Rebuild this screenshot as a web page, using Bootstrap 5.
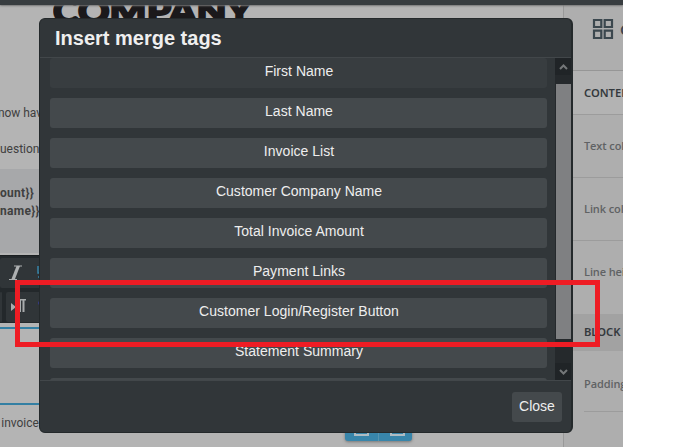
<!DOCTYPE html>
<html lang="en">
<head>
<meta charset="utf-8">
<meta name="viewport" content="width=device-width, initial-scale=1">
<title>Insert merge tags</title>
<link href="https://cdn.jsdelivr.net/npm/bootstrap@5.3.0/dist/css/bootstrap.min.css" rel="stylesheet">
<style>
body{width:676px;height:447px;overflow:hidden;background:#fff;font-family:"Liberation Sans",Arial,sans-serif;font-size:14px;line-height:18px}
.editor{width:623px;height:447px;background:#b4b4b4}
.topbar{height:5px;background:#383d40;box-shadow:0 1px 2px #777;z-index:1}
.mail{width:563px;font:12px/18px Roboto,sans-serif;color:#3f4040}
.brand{height:99px;padding:0 0 0 53px;font:900 33px/11px Lato,sans-serif;color:#1b191b;white-space:nowrap;-webkit-text-stroke:2px #1b191b}
.brand span{display:inline-block;transform:scaleX(1.18);transform-origin:0 0}
.copy{height:65px;white-space:nowrap}
.copy p{height:36px}
.copy p:first-child{text-indent:-2px;letter-spacing:-.05px}
.totals{height:84px;background:#a7a8aa;padding-top:15px;font-weight:700;white-space:nowrap;letter-spacing:.3px}
.tools{height:68px;margin-top:2px;background:#23282b;border-top:1px solid #1b1f21;padding-top:2px}
.tool{height:30px;background:#303538;border-radius:2px}
.tool-edge{width:2px}
.rule{height:2px;background:#337fa3}
.blank{height:74px}
.invoice-line{height:24px;padding-top:9px}
.picker{width:67px;height:12px;background:#3885aa;border-radius:0 0 3px 3px;box-shadow:0 1px 3px #777;margin-left:345px}
.side{width:60px;border-left:1px solid #999;background:#aeaeae;font:600 11.2px/18px "Noto Sans",sans-serif;color:#606264;white-space:nowrap}
.side>div{padding-left:20px;overflow:hidden;border-bottom:1px solid #9c9c9c;flex:none}
.side .head{height:66px;padding:13px 0 0 28px;border-bottom:1px solid #969696;font-size:15px;color:#3b4650}
.head-label{margin-left:6px;padding-top:2px}
.side .sect{height:44px;padding-top:13px;background:#b3b3b3;color:#34393d}
.side .opt{height:63px;padding-top:22px;font-family:"Open Sans",sans-serif;font-size:11px;letter-spacing:-.1px}
.side .line-opt{height:73px;border:0}
.side .pad-opt{height:60px;padding-top:24px}
.side .pad-opt{border:0}
.side .block-sect{height:37px;background:#a2a2a2;padding-top:9px;color:#34393d;border:0}
.side .foot-line{width:39px;padding:0}
.merge-box{left:39px;top:18px;width:534px;height:415px;background:#313639;border:1px solid #24292b;border-width:1px 2px 1px 1px;border-radius:6px;color:#eee;z-index:2;overflow:hidden}
.merge-head{height:39px;border-bottom:1px solid #42474a;padding-left:15px;font-weight:700;font-size:20px;line-height:38px;color:#efefef}
.merge-body{height:322px}
.tags{width:515px;padding:0 8px 0 10px;gap:10px}
.tag,.tag:hover{height:30px;flex:none;background:#44494c;border:0;border-radius:3px;color:#eee;font-size:14px;line-height:16px;padding:0 0 4px 1px;display:block;letter-spacing:.02px}
.tag:first-child{background:#383d40}
.scroller{width:16px;background:#25292c}
.arrow{height:17px;background:#202427}
.thumb{height:255px;margin-top:9px;margin-left:1px;background:#7f8082}
.merge-foot{height:52px;border-top:1px solid #42474a;padding:11px 9px 0 0}
.close-btn,.close-btn:hover{width:50px;height:30px;background:#44494c;color:#eee;border:0;border-radius:3px;padding:0 0 2px;font-size:14px;line-height:28px}
.marker{left:15px;top:280px;width:585px;height:67px;border:5px solid #ee1c24;z-index:3}
</style>
<script src="https://cdn.jsdelivr.net/npm/bootstrap@5.3.0/dist/js/bootstrap.bundle.min.js"></script>
</head>
<body class="position-relative m-0">
<div class="editor d-flex flex-column overflow-hidden">
  <div class="topbar position-relative flex-shrink-0"></div>
  <div class="d-flex flex-grow-1">
    <main class="mail flex-shrink-0 overflow-hidden">
      <div class="brand"><span>COMPANY</span></div>
      <div class="copy"><p class="m-0">now have</p><p class="m-0">uestions</p></div>
      <div class="totals"><div>ount}}</div><div>name}}</div></div>
      <div class="tools d-flex flex-column">
        <div class="tool mb-1">
          <svg width="50" height="30" viewBox="0 0 50 30" class="d-block"><path d="M14 8h8M9 21.500h8" stroke="#aeb1b2" stroke-width="1.200" fill="none"/><path d="M16.500 8h3.500l-5 13h-3.500z" fill="#aeb1b2"/><path d="M38 8v7h4M38 19h4" stroke="#3684a8" stroke-width="1.500" fill="none"/></svg>
        </div>
        <div class="d-flex"><div class="tool tool-edge me-1"></div>
        <div class="tool flex-grow-1"><svg width="50" height="30" viewBox="6 0 50 30" class="d-block"><path d="M11 11l5 4-5 4z" fill="#a9acad"/><path d="M26 7h-7c-5 0-5 6 0 6v7h2V8.500h1.500V20h2V8.500H26z" fill="#a9acad"/><circle cx="40" cy="11" r="2" fill="#353a8c"/></svg></div></div>
      </div>
      <div class="rule mt-1"></div>
      <div class="blank"></div>
      <div class="rule"></div>
      <div class="invoice-line">&#8202;invoice</div>
      <div class="picker"><svg width="67" height="12" viewBox="0 0 67 12" class="d-block"><path d="M33.500 0v12" stroke="#5794af"/><path d="M10 0v6h13V0M46 0v6h13V0" fill="none" stroke="#aebbc2" stroke-width="2"/></svg></div>
    </main>
    <aside class="side d-flex flex-column flex-shrink-0 overflow-hidden">
      <div class="head d-flex align-items-start"><svg class="flex-shrink-0" width="22" height="22" viewBox="0 0 22 22" fill="none" stroke="#3b474e" stroke-width="2.200"><path d="M2 2h7.300v7H2zM12.700 2H20v7h-7.300zM2 12.700h7.300V20H2zM12.700 12.700H20V20h-7.300z"/></svg><span class="head-label">Content</span></div>
      <div class="sect">CONTENT</div>
      <div class="opt">Text color</div>
      <div class="opt">Link color</div>
      <div class="opt line-opt">Line height</div>
      <div class="block-sect">BLOCK</div>
      <div class="opt pad-opt">Padding</div>
      <div class="foot-line ms-auto"></div>
    </aside>
  </div>
</div>
<section class="merge-box position-absolute">
  <header class="merge-head">Insert merge tags</header>
  <div class="merge-body d-flex overflow-hidden">
    <div class="tags d-flex flex-column overflow-hidden flex-shrink-0">
      <button class="btn tag">First Name</button><button class="btn tag">Last Name</button><button class="btn tag">Invoice List</button><button class="btn tag">Customer Company Name</button><button class="btn tag">Total Invoice Amount</button><button class="btn tag">Payment Links</button><button class="btn tag">Customer Login/Register Button</button><button class="btn tag">Statement Summary</button><button class="btn tag" aria-label="More tags"></button>
    </div>
    <div class="scroller d-flex flex-column">
      <div class="arrow"><svg class="d-block" width="16" height="17" viewBox="0 0 16 17"><path d="M5 11l3.500-3.500L12 11" fill="none" stroke="#747779" stroke-width="2"/></svg></div>
      <div class="thumb"></div>
      <div class="arrow mt-auto"><svg class="d-block" width="16" height="17" viewBox="0 0 16 17"><path d="M5 7l3.500 3.500L12 7" fill="none" stroke="#747779" stroke-width="2"/></svg></div>
    </div>
  </div>
  <footer class="merge-foot d-flex justify-content-end"><button class="btn close-btn">Close</button></footer>
</section>
<div class="marker position-absolute"></div>
</body>
</html>
